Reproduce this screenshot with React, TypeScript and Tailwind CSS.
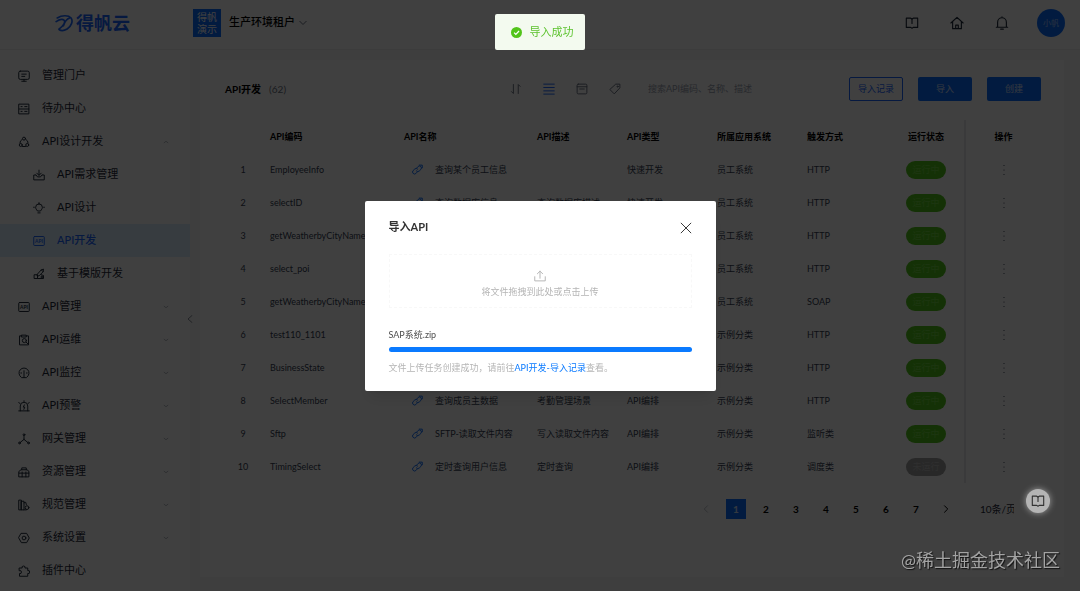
import { useState } from 'react';
import type { ReactNode } from 'react';

type IconProps = { children: ReactNode; className?: string };

function Icon({ children, className = 'size-3' }: IconProps) {
  return (
    <svg
      className={className}
      viewBox="0 0 16 16"
      fill="none"
      stroke="currentColor"
      strokeWidth="1.3"
      strokeLinecap="round"
      strokeLinejoin="round"
      aria-hidden="true"
    >
      {children}
    </svg>
  );
}

const ApiBox = () => (
  <Icon>
    <rect x="1" y="2" width="14" height="12" rx="1" />
    <text x="8" y="10.500" fontSize="6.500" fontWeight="700" textAnchor="middle" fill="currentColor" stroke="none">API</text>
  </Icon>
);

const BookIcon = ({ className = 'size-3.5' }: { className?: string }) => (
  <Icon className={className}>
    <path d="M1.500 2.500h5L8 3.500l1.500-1h5v10.500h-5L8 14l-1.500-1h-5z" />
    <path d="M8 3.500V8.500" />
  </Icon>
);

const LinkIcon = () => (
  <Icon className="size-3">
    <path d="M7.500 5.500 9.500 3.300a2.700 2.700 0 0 1 3.800 3.800L11 9.300a2.700 2.700 0 0 1-3.800 0" />
    <path d="M8.500 10.500l-2 2.200a2.700 2.700 0 0 1-3.800-3.800L5 6.700a2.700 2.700 0 0 1 3.800 0" />
    <path d="M11 1.500h4V5" />
  </Icon>
);

const menu: { label: string; icon: ReactNode; sub?: boolean; arrow?: 'up' | 'down'; active?: boolean }[] = [
  {
    label: '管理门户',
    icon: <Icon><rect x="1" y="1.500" width="14" height="11" rx="2" /><path d="M5 5.500h6M5 8.500h4M8 12.500V15M5 15h6" /></Icon>,
  },
  {
    label: '待办中心',
    icon: <Icon><path d="M1.500 1.500h13v13h-13zM1.500 8h13M4 4.800h1.500M9 4.800h3M4 11.200h1.500M9 11.200h3" /></Icon>,
  },
  {
    label: 'API设计开发',
    arrow: 'up',
    icon: <Icon><path d="M5.500 4.500a5.500 5.500 0 0 0-3 5M10.500 4.500a5.500 5.500 0 0 1 3 5M6 14h4" /><circle cx="8" cy="3.500" r="2" /><circle cx="3.700" cy="12" r="2" /><circle cx="12.300" cy="12" r="2" /></Icon>,
  },
  {
    label: 'API需求管理',
    sub: true,
    icon: <Icon><path d="M3.500 8H1v6.500h14V8h-2.500M8 1.500V8M5 5.500 8 8.500l3-3M4 8l2 2.500h4L12 8" /></Icon>,
  },
  {
    label: 'API设计',
    sub: true,
    icon: <Icon><path d="M8 2.500a4.500 4.500 0 0 0-4.500 4.500c0 2 1.200 3 2.500 5h4c1.300-2 2.500-3 2.500-5A4.500 4.500 0 0 0 8 2.500zM6.500 14.500h3M.8 7h1M14.200 7h1M8 .8v1" /></Icon>,
  },
  { label: 'API开发', sub: true, active: true, icon: <ApiBox /> },
  {
    label: '基于模版开发',
    sub: true,
    icon: <Icon><path d="M2 9h4v5H2zM6 14h8v-4l-3-1M6 8l5-5.500L13.500 5 8 10.500H6zM11 2.500 14 1.500 13.500 5" /><circle cx="11.500" cy="12" r="1" /></Icon>,
  },
  { label: 'API管理', arrow: 'down', icon: <ApiBox /> },
  {
    label: 'API运维',
    arrow: 'down',
    icon: <Icon><path d="M5 2.500H2v12h12v-12h-3M5 1.500h6v2.500H5zM11 11l2.500 2.500" /><circle cx="8.500" cy="8.800" r="2.700" /></Icon>,
  },
  {
    label: 'API监控',
    arrow: 'down',
    icon: <Icon><path d="M4 13.500a6.700 6.700 0 1 1 8 0M8 5v9M5 14.200h6M3.800 8h1M11.200 8h1" /></Icon>,
  },
  {
    label: 'API预警',
    arrow: 'down',
    icon: <Icon><path d="M1 14.500h14M3 14.500V8a5 5 0 0 1 10 0v6.500M8.500 6.500 7 9.500h2l-1.200 3M1 3.500l1.500 1M15 3.500l-1.500 1M8 1v1" /></Icon>,
  },
  {
    label: '网关管理',
    arrow: 'down',
    icon: <Icon><path d="M8 3.500V8.500M8 8.500 2.500 13M8 8.500l5.500 4.500" /><circle cx="8" cy="2.300" r="1.200" /><circle cx="2" cy="13.300" r="1.200" /><circle cx="14" cy="13.300" r="1.200" /></Icon>,
  },
  {
    label: '资源管理',
    arrow: 'down',
    icon: <Icon><path d="M1.500 7 4 5h8l2.500 2v7.500h-13zM5 5V2.500h6V5M1.500 9.500h13M5.500 8v6.500M10.500 8v6.500" /></Icon>,
  },
  {
    label: '规范管理',
    arrow: 'down',
    icon: <Icon><path d="M1.500 1.500h3v13h-3zM4.500 3h3.500v11.500H4.500zM8 5l2.300-.6.800 3M8 14.500h3" /><circle cx="12" cy="11.500" r="2.500" /></Icon>,
  },
  {
    label: '系统设置',
    arrow: 'down',
    icon: <Icon><path d="M4.500 1.800h7L15 8l-3.500 6.200h-7L1 8z" /><circle cx="8" cy="8" r="2.500" /></Icon>,
  },
  {
    label: '插件中心',
    icon: <Icon><path d="M2 4h3.500a2 2 0 1 1 3.800 0H13v3.500a2 2 0 1 1 0 3.800V15H2v-3.700a2 2 0 1 0 0-3.800z" /></Icon>,
  },
];

const rows = [
  { code: 'EmployeeInfo', name: '查询某个员工信息', desc: '', type: '快速开发', system: '员工系统', trigger: 'HTTP', running: true },
  { code: 'selectID', name: '查询数据库信息', desc: '查询数据库描述', type: '快速开发', system: '员工系统', trigger: 'HTTP', running: true },
  { code: 'getWeatherbyCityName', name: '', desc: '', type: '', system: '员工系统', trigger: 'HTTP', running: true },
  { code: 'select_poi', name: '', desc: '', type: '', system: '员工系统', trigger: 'HTTP', running: true },
  { code: 'getWeatherbyCityName', name: '', desc: '', type: '', system: '员工系统', trigger: 'SOAP', running: true },
  { code: 'test110_1101', name: '', desc: '', type: '', system: '示例分类', trigger: 'HTTP', running: true },
  { code: 'BusinessState', name: '', desc: '', type: '', system: '示例分类', trigger: 'HTTP', running: true },
  { code: 'SelectMember', name: '查询成员主数据', desc: '考勤管理场景', type: 'API编排', system: '示例分类', trigger: 'HTTP', running: true },
  { code: 'Sftp', name: 'SFTP-读取文件内容', desc: '写入读取文件内容', type: 'API编排', system: '示例分类', trigger: '监听类', running: true },
  { code: 'TimingSelect', name: '定时查询用户信息', desc: '定时查询', type: 'API编排', system: '示例分类', trigger: '调度类', running: false },
];

function Header() {
  return (
    <header className="flex h-[50px] shrink-0 items-center border-b border-[#f0f0f0] bg-white pr-[15px] pb-1">
      <div className="flex w-[193px] shrink-0 items-center gap-[3px] pl-[55px] text-[#1a66ff]">
        <Icon className="size-[18px]">
          <path
            d="M2 3.500C6 1 12 .8 14.300 3.500c2 2.700.2 7.500-3.500 9.800-2.500 1.500-5.300 1.700-7 .7M1 6.800c2.500-1.600 5.500-2.500 7-1.300 1.700 1.500-.5 5-4.500 8M13 3.500C10 4.500 8.500 7 7.500 10.500"
            strokeWidth="1.500"
          />
        </Icon>
        <span className="text-lg leading-6 font-bold">得帆云</span>
      </div>
      <div className="flex size-7 flex-col items-center justify-center bg-[#0a6cff] text-[10px] leading-3 text-white">
        <span>得帆</span>
        <span>演示</span>
      </div>
      <button className="ml-2 flex items-center gap-1 text-[11px] font-medium text-black">
        生产环境租户
        <Icon className="size-2 text-gray-500"><path d="M1.500 4.500 8 11l6.500-6.500" strokeWidth="2" /></Icon>
      </button>
      <nav className="ml-auto flex items-center gap-[31px] text-gray-800">
        <button aria-label="文档"><BookIcon /></button>
        <button aria-label="首页">
          <Icon className="size-3.5"><path d="M1 8 8 1.500 15 8M3 6.500v8h10v-8M6.500 14.500v-4h3v4" /></Icon>
        </button>
        <button aria-label="通知">
          <Icon className="size-3.5"><path d="M1.500 12.800h13M3 12.800V7a5 5 0 0 1 10 0v5.800M6.500 15h3M8 1v1" /></Icon>
        </button>
        <button className="-ml-[3px] flex size-7 items-center justify-center rounded-full bg-[#0a6cff] text-[8px] text-white/60">小帆</button>
      </nav>
    </header>
  );
}

function Sidebar() {
  return (
    <aside className="relative w-[190px] shrink-0 bg-white pt-[9px]">
      <nav>
        {menu.map((item) => (
          <a
            key={item.label}
            href="#"
            className={`flex h-[33px] items-center gap-3 pr-[21px] text-[11px] ${item.sub ? 'pl-[33px]' : 'pl-[18px]'} ${
              item.active ? 'bg-[#dceeff] font-medium text-[#1a66ff]' : 'text-gray-800'
            }`}
          >
            {item.icon}
            <span>{item.label}</span>
            {item.arrow && (
              <Icon className="ml-auto size-1.5 text-gray-500">
                {item.arrow === 'up' ? <path d="M3 10l5-4 5 4" /> : <path d="M3 6l5 4 5-4" />}
              </Icon>
            )}
          </a>
        ))}
      </nav>
      <button aria-label="收起菜单" className="absolute top-[265px] -right-1 text-gray-600">
        <Icon className="size-2"><path d="M12 1 4 8l8 7" /></Icon>
      </button>
    </aside>
  );
}

function Toolbar() {
  return (
    <div className="flex h-6 items-center">
      <h1 className="text-[10px] font-bold text-black">API开发</h1>
      <span className="ml-2 text-[10px] text-gray-500">(62)</span>
      <div className="ml-auto flex items-center gap-[21px] text-gray-500">
        <button aria-label="排序">
          <Icon><path d="M4.500 2v12L2 11.500M11 14V2l2.500 2.500" /></Icon>
        </button>
        <button aria-label="列表视图" className="text-[#1a66ff]">
          <Icon><path d="M1 1.500h14M1 6h14M1 10.500h14M1 14.800h14" /></Icon>
        </button>
        <button aria-label="卡片视图">
          <Icon><rect x="1.500" y="1.500" width="13" height="13" rx="1.500" /><path d="M1.500 5h13M5 8h6" /></Icon>
        </button>
        <button aria-label="标签">
          <Icon><path d="M9.500 1.500h5v5L7 14.500 1.500 9z" /><circle cx="11.500" cy="4.800" r=".8" /></Icon>
        </button>
      </div>
      <input
        type="search"
        aria-label="搜索"
        placeholder="搜索API编码、名称、描述"
        className="ml-[27px] w-[186px] text-[9px] outline-none placeholder:text-gray-400"
      />
      <div className="ml-[15px] flex gap-[15px] text-[9px]">
        <button className="h-6 w-[54px] rounded-xs border border-[#1a66ff] text-[#1a66ff]">导入记录</button>
        <button className="h-6 w-[54px] rounded-xs bg-[#0a6cff] text-white/80">导入</button>
        <button className="h-6 w-[54px] rounded-xs bg-[#0a6cff] text-white/80">创建</button>
      </div>
    </div>
  );
}

function ApiTable() {
  return (
    <table className="mt-[19px] w-full table-fixed text-left text-[9px] whitespace-nowrap text-gray-700">
      <colgroup>
        <col className="w-[36px]" />
        <col className="w-[134px]" />
        <col className="w-[133px]" />
        <col className="w-[90px]" />
        <col className="w-[90px]" />
        <col className="w-[90px]" />
        <col className="w-[90px]" />
        <col className="w-[77px]" />
        <col className="w-[76px]" />
      </colgroup>
      <thead>
        <tr className="h-[33px] font-bold text-black [&>th]:pl-[9px]">
          <th />
          <th>API编码</th>
          <th>API名称</th>
          <th>API描述</th>
          <th>API类型</th>
          <th>所属应用系统</th>
          <th>触发方式</th>
          <th className="text-center pl-0!">运行状态</th>
          <th className="border-l-2 border-gray-200 text-center pl-0!">操作</th>
        </tr>
      </thead>
      <tbody>
        {rows.map((row, i) => (
          <tr key={i} className="h-[33px] [&>td]:pl-[9px]">
            <td className="text-center pl-0!">{i + 1}</td>
            <td>{row.code}</td>
            <td>
              <span className="flex items-center gap-3 pl-[7px]">
                <span className="text-[#0a6cff]"><LinkIcon /></span>
                {row.name}
              </span>
            </td>
            <td>{row.desc}</td>
            <td>{row.type}</td>
            <td>{row.system}</td>
            <td>{row.trigger}</td>
            <td className="pl-0!">
              <span
                className={`mx-auto flex h-[18px] w-10 items-center justify-center rounded-full ${
                  row.running ? 'bg-[#52c41a] text-[#73d544]' : 'bg-[#a0a0a0] text-[#bcbcbc]'
                }`}
              >
                {row.running ? '运行中' : '未运行'}
              </span>
            </td>
            <td className="border-l-2 border-gray-200 text-center pl-0!">
              <button aria-label="更多操作" className="align-middle">
                <svg className="h-3 w-1" viewBox="0 0 4 12" fill="currentColor" aria-hidden="true">
                  <circle cx="2" cy="1.500" r=".6" />
                  <circle cx="2" cy="6" r=".6" />
                  <circle cx="2" cy="10.500" r=".6" />
                </svg>
              </button>
            </td>
          </tr>
        ))}
      </tbody>
    </table>
  );
}

function Pagination() {
  const [page, setPage] = useState(1);

  return (
    <div className="mt-4 flex items-center justify-end gap-2.5 pr-[27px] text-[10px] font-bold text-black">
      <button aria-label="上一页" className="flex size-5 items-center justify-center text-gray-400">
        <Icon className="size-2"><path d="M11 1.500 4.500 8l6.500 6.500" /></Icon>
      </button>
      {[1, 2, 3, 4, 5, 6, 7].map((n) => (
        <button
          key={n}
          onClick={() => setPage(n)}
          className={`size-5 ${n === page ? 'bg-[#0a6cff] text-white/80' : ''}`}
        >
          {n}
        </button>
      ))}
      <button aria-label="下一页" className="flex size-5 items-center justify-center">
        <Icon className="size-2"><path d="M5 1.500 11.500 8 5 14.500" strokeWidth="2" /></Icon>
      </button>
      <select aria-label="每页条数" className="ml-3.5 w-[34px] appearance-none font-normal text-gray-800">
        <option>10条/页</option>
      </select>
    </div>
  );
}

function ImportDialog({ onClose }: { onClose: () => void }) {
  return (
    <div className="fixed inset-0 z-10 flex items-center justify-center bg-black/75">
      <div role="dialog" aria-labelledby="import-title" className="w-[351px] rounded-xs bg-white px-6 pt-[18px] pb-3.5 shadow-lg">
        <div className="flex h-[18px] items-center justify-between">
          <h2 id="import-title" className="text-[11px] font-bold text-[#333333]">导入API</h2>
          <button aria-label="关闭" onClick={onClose} className="text-[#333333]">
            <Icon><path d="M1.500 1.500l13 13M14.500 1.500l-13 13" /></Icon>
          </button>
        </div>
        <label className="mt-[17px] flex h-[54px] flex-col items-center justify-center border border-dashed border-[#f8f8f8] pt-2 text-[9px] text-[#b5b5b5]">
          <Icon><path d="M1 9v5.500h14V9M8 11V1.500M4.500 5 8 1.500 11.500 5" /></Icon>
          <span className="mt-0.5 leading-4">将文件拖拽到此处或点击上传</span>
          <input type="file" className="sr-only" />
        </label>
        <div className="mt-[18px] text-[9px] leading-[18px] text-[#4d4d4d]">SAP系统.zip</div>
        <div role="progressbar" aria-label="上传进度" aria-valuenow={100} className="mt-[3px] h-[5px] rounded-full bg-[#0a7aff]" />
        <p className="mt-[7px] text-[9px] leading-[18px] text-[#b5b5b5]">
          文件上传任务创建成功，请前往<a href="#" className="text-[#0a7aff]">API开发-导入记录</a>查看。
        </p>
      </div>
    </div>
  );
}

function App() {
  const [showImport, setShowImport] = useState(true);

  return (
    <div className="flex min-h-screen flex-col bg-[#f5f5f6] font-['Lato','Noto_Sans_CJK_SC',sans-serif]">
      <Header />
      <div className="flex flex-1">
        <Sidebar />
        <main className="flex min-w-0 flex-1 pt-2.5 pr-4 pb-3.5 pl-2.5">
          <section className="min-w-0 flex-1 bg-white pt-[17px] pr-[23px] pl-[25px]">
            <Toolbar />
            <ApiTable />
            <Pagination />
          </section>
        </main>
      </div>

      {showImport && <ImportDialog onClose={() => setShowImport(false)} />}

      {/* Success toast */}
      <div role="status" className="fixed top-3.5 left-1/2 z-20 flex h-9 w-[90px] -translate-x-1/2 items-center justify-center gap-2 rounded-xs bg-[#f3faef] pl-1 text-[11px] text-[#5cc32e]">
        <svg className="size-[11px]" viewBox="0 0 16 16" aria-hidden="true">
          <circle cx="8" cy="8" r="8" fill="#52c41a" />
          <path d="M4.500 8.200 7 10.700l4.700-4.900" fill="none" stroke="white" strokeWidth="1.800" />
        </svg>
        导入成功
      </div>

      {/* Help button */}
      <button aria-label="帮助文档" className="fixed right-[30px] bottom-[78px] z-20 flex size-6 items-center justify-center rounded-full bg-[#b4b4b4] text-[#333333] shadow-[0_0_6px_rgba(255,255,255,0.5)]">
        <BookIcon />
      </button>

      <div className="pointer-events-none fixed right-5 bottom-[17px] z-20 text-lg leading-[27px] text-[#a3a3a3] [text-shadow:1px_1px_1px_#111111]">
        @稀土掘金技术社区
      </div>
    </div>
  );
}

export default App;
